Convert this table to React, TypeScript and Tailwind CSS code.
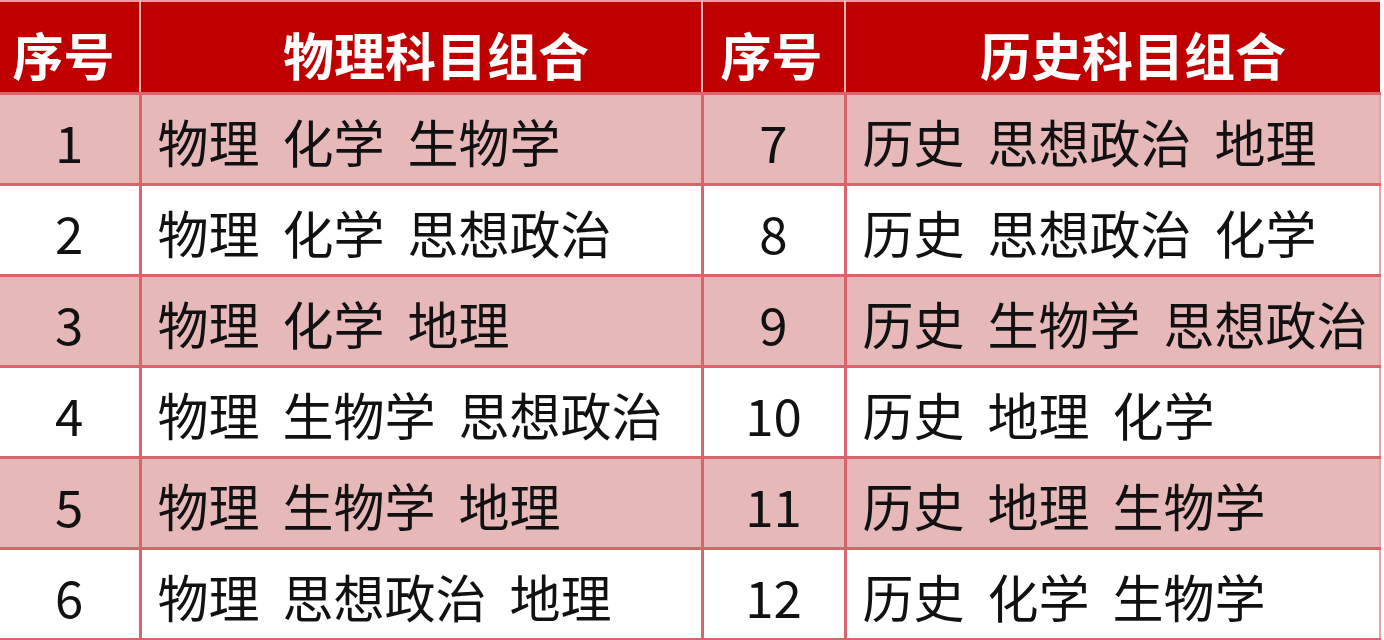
const rows: [string, string[], string, string[]][] = [
  ["1", ["物理", "化学", "生物学"], "7", ["历史", "思想政治", "地理"]],
  ["2", ["物理", "化学", "思想政治"], "8", ["历史", "思想政治", "化学"]],
  ["3", ["物理", "化学", "地理"], "9", ["历史", "生物学", "思想政治"]],
  ["4", ["物理", "生物学", "思想政治"], "10", ["历史", "地理", "化学"]],
  ["5", ["物理", "生物学", "地理"], "11", ["历史", "地理", "生物学"]],
  ["6", ["物理", "思想政治", "地理"], "12", ["历史", "化学", "生物学"]],
];

function Words({ items }: { items: string[] }) {
  return (
    <div className="flex gap-[23px] pl-[16px] pt-[5px]">
      {items.map((w, i) => (
        <span key={i}>{w}</span>
      ))}
    </div>
  );
}

export default function App() {
  return (
    <div
      className="w-[1384px] h-[640px] bg-white overflow-hidden pr-[3px]"
      style={{ fontFamily: '"Noto Sans CJK SC", "Noto Sans", sans-serif' }}
    >
      <table className="w-[1381px] border-collapse table-fixed text-[51px] leading-none text-[#111]">
        <colgroup>
          <col className="w-[140px]" />
          <col className="w-[562px]" />
          <col className="w-[143px]" />
          <col />
        </colgroup>
        <thead>
          <tr className="h-[92px] bg-[#c00000] text-white font-bold border-t-[2px] border-t-[#e8a0a4]">
            <th className="border-r-[2px] border-r-[#f2b4b8] text-center pr-[12px] pt-[16px]">序号</th>
            <th className="border-r-[2px] border-r-[#f2b4b8] text-center pl-[30px] pt-[16px]">物理科目组合</th>
            <th className="border-r-[2px] border-r-[#f2b4b8] text-center pr-[4px] pt-[16px]">序号</th>
            <th className="text-center pl-[40px] pt-[16px]">历史科目组合</th>
          </tr>
        </thead>
        <tbody>
          {rows.map(([a, b, c, d], i) => (
            <tr
              key={a}
              className={
                (i % 2 === 0 ? "bg-[#e6b8b8]" : "bg-white") + " h-[91px]"
              }
            >
              <td className="border-[3px] border-[#d9646c] border-l-0 text-center pt-[5px]">{a}</td>
              <td className="border-[3px] border-[#d9646c]">
                <Words items={b} />
              </td>
              <td className="border-[3px] border-[#d9646c] text-center pt-[5px]">{c}</td>
              <td className="border-[3px] border-[#d9646c] border-r-[2px] border-r-[#e3a5a9]">
                <Words items={d} />
              </td>
            </tr>
          ))}
        </tbody>
      </table>
    </div>
  );
}
